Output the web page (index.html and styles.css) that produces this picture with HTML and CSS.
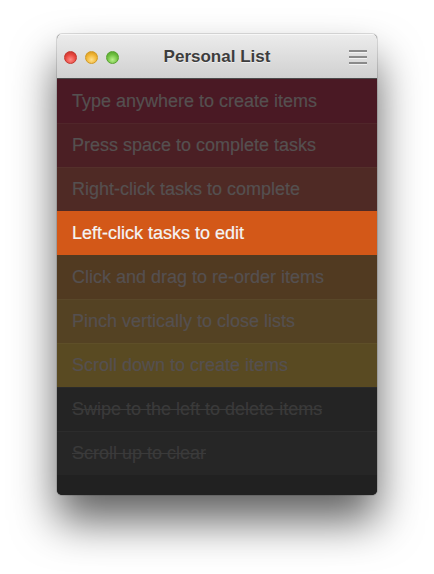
FILE: index.html
```html
<!DOCTYPE html>
<html>
<head>
<meta charset="utf-8">
<link rel="stylesheet" href="styles.css">
</head>
<body>
<div class="window">
  <div class="titlebar">
    <div class="lights">
      <span class="light red"></span>
      <span class="light yellow"></span>
      <span class="light green"></span>
    </div>
    <div class="title">Personal List</div>
    <div class="menu"><span></span><span></span><span></span></div>
  </div>
  <ul class="list">
    <li class="item c1">Type anywhere to create items</li>
    <li class="item c2">Press space to complete tasks</li>
    <li class="item c3">Right-click tasks to complete</li>
    <li class="item c4 active">Left-click tasks to edit</li>
    <li class="item c5">Click and drag to re-order items</li>
    <li class="item c6">Pinch vertically to close lists</li>
    <li class="item c7">Scroll down to create items</li>
    <li class="item done c8">Swipe to the left to delete items</li>
    <li class="item done c9">Scroll up to clear</li>
  </ul>
  <div class="footer"></div>
</div>
</body>
</html>
```
FILE: styles.css
```css
html, body {
  margin: 0;
  padding: 0;
  background: #ffffff;
}
body {
  box-sizing: border-box;
  min-height: 574px;
  padding: 34px 0 0 57px;
  font-family: "Liberation Sans", Arial, sans-serif;
}
.window {
  width: 320px;
  height: 461px;
  border-radius: 5px;
  overflow: hidden;
  background: #202020;
  box-shadow: 0 26px 44px rgba(0,0,0,0.62), 0 0 0 1px rgba(0,0,0,0.12);
  display: flex;
  flex-direction: column;
}
.titlebar {
  height: 45px;
  flex: none;
  box-sizing: border-box;
  padding-top: 2px;
  display: flex;
  align-items: center;
  position: relative;
  background: linear-gradient(#ececec, #d0d0d0);
  border-bottom: 1px solid #4a4a4a;
  box-shadow: inset 0 1px 0 #f7f7f7;
}
.lights {
  display: flex;
  gap: 8px;
  padding-left: 7px;
}
.light {
  width: 13px;
  height: 13px;
  border-radius: 50%;
  box-sizing: border-box;
}
.red { background: radial-gradient(circle at 50% 70%, #ff8a84, #e8473f 55%, #b8312b); border: 1px solid #c4372f; }
.yellow { background: radial-gradient(circle at 50% 70%, #ffe08a, #f1b534 55%, #c98e1c); border: 1px solid #d19a25; }
.green { background: radial-gradient(circle at 50% 70%, #b8f08a, #6fc040 55%, #4a9a26); border: 1px solid #58a22f; }
.title {
  position: absolute;
  left: 0;
  right: 0;
  top: 13px;
  text-align: center;
  font-weight: bold;
  font-size: 17px;
  line-height: 20px;
  color: #3d3d3d;
  text-shadow: 0 1px 0 rgba(255,255,255,0.6);
  pointer-events: none;
}
.menu {
  margin-left: auto;
  margin-right: 10px;
  width: 18px;
  display: flex;
  flex-direction: column;
  gap: 4px;
}
.menu span {
  display: block;
  height: 2px;
  background: #8a8a8a;
  box-shadow: 0 1px 0 rgba(255,255,255,0.6);
}
.list {
  list-style: none;
  margin: 0;
  padding: 0;
}
.item {
  height: 44px;
  box-sizing: border-box;
  padding-left: 15px;
  display: flex;
  align-items: center;
  font-size: 18px;
  color: #555050;
  border-top: 1px solid rgba(255,255,255,0.03);
  -webkit-text-stroke: 0.2px currentColor;
}
.item:first-child { border-top: none; }
.c1 { background: #4a1924; }
.c2 { background: #4b1f24; }
.c3 { background: #4f2a25; }
.c4 { background: #d35818; }
.c5 { background: #513a21; }
.c6 { background: #544223; }
.c7 { background: #594a22; }
.c8 { background: #242424; }
.c9 { background: #262626; }
.item.active {
  color: #f4f4f4;
  border-top: none;
}
.item.active + .item { border-top: none; }
.item.done {
  color: #3a3a3a;
  text-decoration: line-through;
}
.footer {
  flex: 1;
  background: #212121;
}
```
